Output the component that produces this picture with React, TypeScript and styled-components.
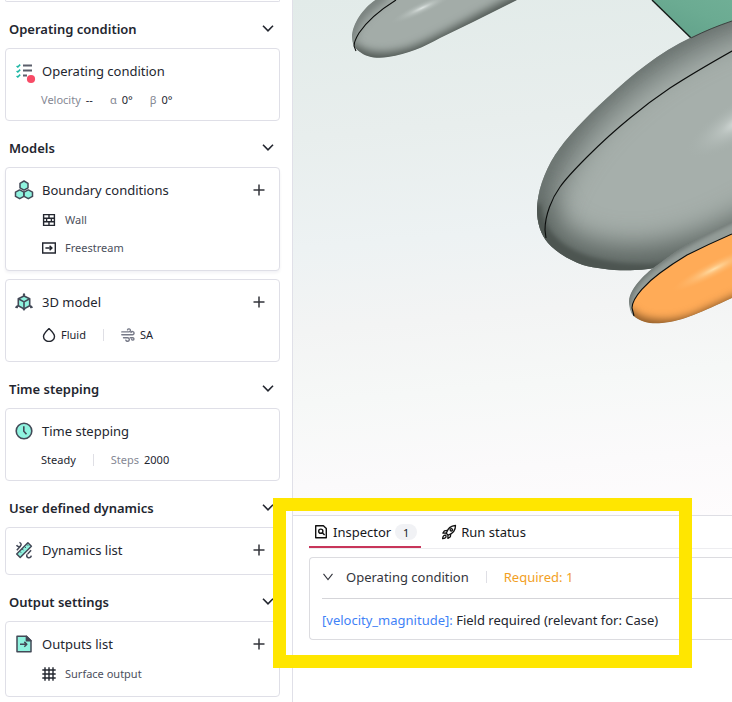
import React from "react";
import styled, { createGlobalStyle } from "styled-components";

const GlobalStyle = createGlobalStyle`
  * { box-sizing: border-box; }
  body {
    margin: 0;
    background: #fff;
    color: #23262f;
    font-family: "Noto Sans", "Open Sans", sans-serif;
    font-size: 13px;
  }
  button {
    font: inherit;
    color: inherit;
    background: none;
    border: 0;
    padding: 0;
    margin: 0;
    cursor: pointer;
    text-align: left;
  }
  svg { display: block; flex: none; }
`;

const Layout = styled.div`
  display: grid;
  grid-template-columns: 293px minmax(0, 1fr);
  min-height: 100vh;
`;

const Sidebar = styled.aside`
  border-right: 1px solid #e0e0e8;
  padding: 0 12px 5px 5px;
`;

const Card = styled.div<{ $raised?: boolean }>`
  border: 1px solid #dfdfe7;
  border-radius: 4px;
  padding: 10px 0 8px;
  background: #fff;
  box-shadow: ${(p) => (p.$raised ? "0 2px 3px rgba(40, 40, 90, 0.06)" : "none")};
  & + & { margin-top: 8px; }
`;

const CardEnd = styled.div`
  height: 2px;
  border: 1px solid #dfdfe7;
  border-top: 0;
  border-radius: 0 0 4px 4px;
`;

const SectionButton = styled.button`
  display: flex;
  align-items: center;
  justify-content: space-between;
  width: 100%;
  height: 46px;
  padding: 8px 6px 0 4px;
  font-size: 13px;
  font-weight: 600;
`;

const TitleRow = styled.div`
  display: flex;
  align-items: center;
  gap: 9px;
  height: 24px;
  margin-bottom: 4px;
  padding: 0 14px 0 9px;
`;

const Title = styled.h3`
  flex: 1;
  margin: 0;
  font-size: 13px;
  font-weight: 400;
`;

const IconSlot = styled.span`
  display: flex;
  svg { overflow: visible; }
`;

const ItemButton = styled.button`
  display: flex;
  align-items: center;
  gap: 9px;
  width: 100%;
  height: 28px;
  padding: 0 0 1px 36px;
  font-size: 11px;
  color: #4c4f5c;
  svg { color: #23262f; }
`;

const Meta = styled.div<{ $tall?: boolean }>`
  display: flex;
  align-items: center;
  gap: 17px;
  height: ${(p) => (p.$tall ? 35 : 25)}px;
  padding: ${(p) => (p.$tall ? "0 0 2px 36px" : "0 0 0 35px")};
  font-size: 11px;
`;

const Pair = styled.span`
  display: flex;
  align-items: center;
  gap: 5px;
`;

const Muted = styled.span`
  color: #858894;
`;

const Divider = styled.span`
  width: 1px;
  height: 12px;
  background: #dfdfe5;
`;

const Main = styled.main`
  display: flex;
  flex-direction: column;
  min-width: 0;
`;

const Viewport = styled.div`
  flex: 1 1 0;
  min-height: 300px;
  overflow: hidden;
  display: flex;
  background: linear-gradient(
    175deg,
    #e2ebe9 0%,
    #e8eeed 25%,
    #edf2f3 45%,
    #f3f4f4 60%,
    #f6f8f7 73%,
    #fbfafb 88%,
    #fefcfd 100%
  );
  svg { width: 100%; height: 100%; }
`;

const Panel = styled.section`
  position: relative;
  min-height: 187px;
  padding-left: 16px;
  border-top: 1px solid #dedee4;
  background: #fff;
`;

const Tabs = styled.div`
  display: flex;
  gap: 16px;
  height: 33px;
  border-bottom: 1px solid #ededf0;
`;

const Tab = styled.button<{ $active?: boolean }>`
  display: flex;
  align-items: center;
  gap: 4px;
  height: 32px;
  padding: 2px 4px 0;
  border-bottom: 2px solid ${(p) => (p.$active ? "#c8355a" : "transparent")};
  font-size: 13px;
  color: #17181c;
`;

const Count = styled.span`
  display: grid;
  place-items: center;
  width: 22px;
  height: 16px;
  border-radius: 8px;
  background: #f1f2f5;
  font-size: 11px;
`;

const Issue = styled.div`
  margin-top: 8px;
  padding-left: 12px;
  border: 1px solid #dcdce0;
  border-right: 0;
  border-radius: 4px 0 0 4px;
`;

const IssueHeader = styled.button`
  display: flex;
  align-items: center;
  width: 100%;
  height: 41px;
  padding-bottom: 2px;
  border-bottom: 1px solid #d5d5d9;
  gap: 17px;
  color: #33353d;
`;

const IssueTitle = styled.span`
  display: flex;
  align-items: center;
  gap: 12px;
`;

const Required = styled.span`
  color: #f2a024;
`;

const IssueText = styled.p`
  margin: 0;
  padding-top: 2px;
  line-height: 38px;
  white-space: nowrap;
  a { color: #3f82f7; text-decoration: none; }
`;

const Highlight = styled.div`
  position: absolute;
  left: -20px;
  top: -18px;
  width: 419px;
  height: 170px;
  border: 13px solid #ffe600;
  pointer-events: none;
`;

const Chevron = () => (
  <svg width="12" height="12" viewBox="0 0 12 12" fill="none" stroke="currentColor" strokeWidth="1.6">
    <path d="M1 2.7 6 7.8 11 2.7" />
  </svg>
);

const ThinChevron = () => (
  <svg width="12" height="12" viewBox="0 0 12 12" fill="none" stroke="#33353d" strokeWidth="1.1">
    <path d="M1.5 2.8 6 8.6 10.5 2.8" />
  </svg>
);

const AddButton = ({ label }: { label: string }) => (
  <button type="button" aria-label={label}>
    <svg width="12" height="12" viewBox="0 0 12 12" stroke="#33353b" strokeWidth="1.5">
      <path d="M6 .5v11M.5 6h11" />
    </svg>
  </button>
);

const ChecklistIcon = () => (
  <svg width="18" height="18" viewBox="0 0 18 18" fill="none">
    <path d="M1.6 4l1.2 1 2.4-2.4M1.6 9l1.2 1 2.4-2.4M1.6 14l1.2 1 2.4-2.4" stroke="#20b8a6" strokeWidth="1.6" />
    <path d="M8 3.5h9M8 8.5h9M8 13.5h4" stroke="#5b5e6b" strokeWidth="1.8" />
    <circle cx="16" cy="17" r="4.1" fill="#f84b66" />
  </svg>
);

const HexagonsIcon = () => (
  <svg width="18" height="18" viewBox="0 0 18 18" fill="#8ff3df" stroke="#434957" strokeWidth="1.5" strokeLinejoin="round">
    <path d="M9 0 13 2.3v4.5L9 9.1 5 6.8V2.3z" />
    <path d="M4.7 8.9 8.9 11.2v4.2l-4.2 2.3-4.2-2.3v-4.2z" />
    <path d="M13.3 8.9 17.5 11.2v4.2l-4.2 2.3-4.2-2.3v-4.2z" />
  </svg>
);

const CubeIcon = () => (
  <svg width="18" height="18" viewBox="0 0 18 18" fill="none" stroke="#434957" strokeWidth="1.6" strokeLinejoin="round">
    <path d="M9 3 14.7 5.8v6.9L9 15.9 3.3 12.7V5.8z" fill="#8ff3df" />
    <path d="M3.3 5.8 9 8.9l5.7-3.1M9 8.9v7M9 3V.4M3.3 12.7.6 14.6M14.7 12.7l2.7 1.9" />
    <path d="M8 2.4 9 1l1 1.4M1.9 12.8l-.9 1.6 1.9.2M16.1 12.8l.9 1.6-1.9.2M8 16 9 17.2l1-1.2" strokeWidth="1.1" />
  </svg>
);

const ClockIcon = () => (
  <svg width="18" height="18" viewBox="0 0 18 18" fill="none" stroke="#434957" strokeWidth="1.6">
    <circle cx="9" cy="9" r="7.8" fill="#8ff3df" />
    <path d="M8.8 4.2v5.1l2.7 3" />
  </svg>
);

const RulerIcon = () => (
  <svg width="18" height="18" viewBox="0 0 18 18" fill="none" stroke="#434957" strokeWidth="1.5" strokeLinejoin="round">
    <path d="M1.7 13 12.9 1.8l3.5 3.5L5.2 16.5z" fill="#8ff3df" />
    <path d="M4.6 10.2l1.5 1.5M7 7.8l1.5 1.5M9.4 5.4l1.5 1.5M11.6 3.2l1.5 1.5" strokeWidth="1" />
    <path d="M4.4 1.4c2 .8 2.2 2.4 1 3.6-1.3 1.2-3.3.6-3.7-1M1.8 9.2 5.6 5M12.6 13.1l3.5-3.9M12.3 13.2c-1 1.2-.8 3 1 3.6 1.6.2 2.7-.5 3-2.1" />
  </svg>
);

const OutputIcon = () => (
  <svg width="18" height="18" viewBox="0 0 18 18" fill="none" stroke="#434957" strokeWidth="1.5" strokeLinejoin="round">
    <path d="M2 1.2h9.4l4.6 4.5v11.1H2z" fill="#8ff3df" />
    <path d="M11.4 1.2v4.5H16z" fill="#434957" />
    <path d="M5 9.3h6.8M9.3 6.9l2.5 2.4-2.5 2.4" />
  </svg>
);

const WallIcon = () => (
  <svg width="14" height="14" viewBox="0 0 14 14" fill="none" stroke="currentColor" strokeWidth="1.4">
    <path d="M1.6 1.6h10.8v10.8H1.6zM1.6 5.2h10.8M1.6 8.8h10.8M7 1.6v3.6M4.6 5.2v3.6M9.4 5.2v3.6M7 8.8v3.6" />
  </svg>
);

const InflowIcon = () => (
  <svg width="14" height="14" viewBox="0 0 14 14" fill="none" stroke="currentColor" strokeWidth="1.4">
    <path d="M.7 2h12.6v10H.7zM3.4 7h6M7.6 4.8 9.9 7 7.6 9.2" />
  </svg>
);

const GridIcon = () => (
  <svg width="14" height="14" viewBox="0 0 14 14" fill="none" stroke="currentColor" strokeWidth="1.4">
    <path d="M3 .3v13.4M7 .3v13.4M11 .3v13.4M.3 3h13.4M.3 7h13.4M.3 11h13.4" />
  </svg>
);

const DropIcon = () => (
  <svg width="14" height="14" viewBox="0 0 14 14" fill="none" stroke="#23262f" strokeWidth="1.4" strokeLinejoin="round">
    <path d="M7 .6C4.6 3 1.5 5.6 1.5 8.4a5.5 5.1 0 0 0 11 0C12.500 5.600 9.400 3 7 .6z" />
  </svg>
);

const WindIcon = () => (
  <svg width="14" height="14" viewBox="0 0 14 14" fill="none" stroke="#777a88" strokeWidth="1.4" strokeLinecap="round">
    <path d="M.8 3.900h7.200a1.500 1.500 0 1 0-1.500-2M.8 6.800h10.700a1.600 1.600 0 1 0-1.500-2.300M2.500 9.700h4a1.800 1.800 0 1 1-1.700 2.400M9.300 9.700h2.500a1.200 1.200 0 1 1-1.200 1.600" />
  </svg>
);

const InspectorIcon = () => (
  <svg width="16" height="16" viewBox="0 0 16 16" fill="none" stroke="#111" strokeWidth="1.4">
    <path d="M2.7 1.7h7.7l2.9 2.9v9.1H2.7z" strokeLinejoin="round" />
    <circle cx="7.8" cy="7.2" r="2.1" />
    <path d="M9.3 8.7l2.3 2.4" />
  </svg>
);

const RocketIcon = () => (
  <svg width="16" height="16" viewBox="0 0 16 16" fill="none" stroke="#111" strokeWidth="1.3" strokeLinejoin="round">
    <path d="M5.2 9.2C6.5 5 9.2 1.8 14.5 1.5c.1 5-2.9 8-7.2 9.7z" />
    <circle cx="10.3" cy="5.8" r="1.2" />
    <path d="M6.2 6.4 3.4 6.8 1.9 9.2l3.3 0M9.7 9.9l-.3 2.8-2.5 1.7V11.2M4.6 11.1c-1.6-.2-2.8 1-3 3.6 2.5-.1 3.8-1.3 3.4-2.9z" />
  </svg>
);

const BODY = "M740 17 L732 21 C717 26 705 31 692 37 C658 53 632 75 607 98 C586 117 566 138 555 155 C544 172 537 193 537 210 C537 223 541 235 548 243 C556 252 569 260 583 265 C598 269 617 271 635 270 C660 270 690 260 740 232Z";
const BODY_SEAM = "M740 47 L732 51 C709 64 690 75 670 88 C655 98 642 108 630 118 C614 131 600 144 587 157 C577 167 567 177 560 187 C552 198 545 215 545 230 L546 238";
const POD = "M377 -1 C365 6 352 23 352 37 C352 43 354 48 360 52 C366 57 377 59 388 57 C408 54 424 47 440 38 L473 22 L519 -1Z";
const POD_SEAM = "M396 0 C380 10 367 21 359 33 C356 38 354 42 354 46 L356 51";
const ENGINE = "M740 218 L732 222 C716 229 704 236 690 243 C679 249 669 256 660 263 C645 273 630 288 629 301 C629 310 631 315 636 318 C643 322 652 324 662 323 C683 321 702 312 732 298 L740 294Z";
const ENGINE_FRONT = "M740 230 L732 234 C716 241 701 248 687 255 C677 261 668 267 660 273 C649 281 632 297 632 308 L634 316 C642 323 652 324 662 323 C683 321 702 312 732 298 L740 294Z";
const ENGINE_SEAM = "M740 230 L732 234 C716 241 701 248 687 255 C677 261 668 267 660 273 C649 281 632 297 632 308 L634 316";

const AircraftModel = () => (
  <svg viewBox="293 0 439 515" preserveAspectRatio="xMinYMin slice" role="img" aria-label="Aircraft geometry">
    <defs>
      <clipPath id="body"><path d={BODY} /></clipPath>
      <clipPath id="pod"><path d={POD} /></clipPath>
      <clipPath id="engine"><path d={ENGINE} /></clipPath>
      <clipPath id="front"><path d={ENGINE_FRONT} /></clipPath>
      <filter id="soft2" filterUnits="userSpaceOnUse" x="293" y="-60" width="560" height="460" colorInterpolationFilters="sRGB"><feGaussianBlur stdDeviation="2" /></filter>
      <filter id="soft4" filterUnits="userSpaceOnUse" x="293" y="-60" width="560" height="460" colorInterpolationFilters="sRGB"><feGaussianBlur stdDeviation="4" /></filter>
      <filter id="soft14" filterUnits="userSpaceOnUse" x="293" y="-60" width="560" height="460" colorInterpolationFilters="sRGB"><feGaussianBlur stdDeviation="14" /></filter>
      <linearGradient id="wing" x1="0" y1="1" x2="1" y2="0">
        <stop offset="0" stopColor="#5f9f88" />
        <stop offset=".6" stopColor="#6bab92" />
        <stop offset="1" stopColor="#70af96" />
      </linearGradient>
      <radialGradient id="glow">
        <stop offset="0" stopColor="#dfe5e3" />
        <stop offset=".35" stopColor="#c5cdca" stopOpacity=".6" />
        <stop offset="1" stopColor="#a8b2ae" stopOpacity="0" />
      </radialGradient>
      <radialGradient id="warmGlow">
        <stop offset="0" stopColor="#ffdfa8" />
        <stop offset=".4" stopColor="#ffc987" stopOpacity=".6" />
        <stop offset="1" stopColor="#ffb566" stopOpacity="0" />
      </radialGradient>
    </defs>

    <path d="M652 0 691 38 732 21 740 17V0z" fill="url(#wing)" />
    <path d="M652 0 691 38" stroke="#151a18" strokeWidth="1.4" />

    <g clipPath="url(#pod)">
      <path d={POD} fill="#a3aca8" />
      <path d="M386 -6 C360 10 350 25 350 40" stroke="#767e7b" strokeWidth="12" fill="none" filter="url(#soft4)" />
      <path d="M346 47 C360 62 382 65 412 56 C442 45 465 29 530 -3" stroke="#525a56" strokeWidth="17" fill="none" filter="url(#soft4)" />
      <ellipse cx="422" cy="8" rx="34" ry="6" transform="rotate(-25 422 8)" fill="url(#glow)" />
    </g>
    <path d={POD_SEAM} fill="none" stroke="#0b0d0c" strokeWidth="1.1" />

    <g clipPath="url(#body)">
      <path d={BODY} fill="#a6afab" />
      <path d="M760 10 C650 40 541 130 531 230" stroke="#6a7370" strokeWidth="34" fill="none" filter="url(#soft14)" />
      <path d="M748 12 C650 40 544 130 535 210" stroke="#69716e" strokeWidth="10" fill="none" filter="url(#soft4)" opacity=".8" />
      <path d="M526 200 C534 255 590 272 650 268 C700 262 730 246 780 220" stroke="#5c6561" strokeWidth="46" fill="none" filter="url(#soft14)" />
      <path d="M532 205 C536 254 587 274 650 273 C690 271 720 256 745 240" stroke="#4d5551" strokeWidth="18" fill="none" filter="url(#soft2)" />
      <ellipse cx="740" cy="121" rx="62" ry="20" transform="rotate(-32 740 121)" fill="url(#glow)" />
    </g>
    <path d={BODY_SEAM} fill="none" stroke="#0b0d0c" strokeWidth="1.1" />
    <path d="M691 38 C705 31 717 26 732 21" fill="none" stroke="#3a423f" />

    <g clipPath="url(#engine)">
      <path d={ENGINE} fill="#949d99" />
      <path d="M740 216 C680 244 626 276 627 306" stroke="#6f7774" strokeWidth="7" fill="none" filter="url(#soft2)" />
    </g>
    <g clipPath="url(#front)">
      <path d={ENGINE_FRONT} fill="#ffab57" />
      <path d="M624 312 C636 329 667 332 697 321 L747 298" stroke="#8a5827" strokeWidth="15" fill="none" filter="url(#soft4)" />
      <ellipse cx="714" cy="269" rx="46" ry="8" transform="rotate(-27 714 269)" fill="url(#warmGlow)" />
    </g>
    <path d={ENGINE_SEAM} fill="none" stroke="#0b0d0c" strokeWidth="1.1" />
  </svg>
);

const Section = ({ title, children }: { title: string; children: React.ReactNode }) => (
  <section>
    <SectionButton type="button" aria-expanded="true">
      {title}
      <Chevron />
    </SectionButton>
    {children}
  </section>
);

const CardTitle = ({ icon, title, addable }: { icon: React.ReactNode; title: string; addable?: boolean }) => (
  <TitleRow>
    <IconSlot>{icon}</IconSlot>
    <Title>{title}</Title>
    {addable && <AddButton label={`Add to ${title}`} />}
  </TitleRow>
);

export default function App() {
  return (
    <>
      <GlobalStyle />
      <Layout>
        <Sidebar>
          <CardEnd />
          <Section title="Operating condition">
            <Card>
              <CardTitle icon={<ChecklistIcon />} title="Operating condition" />
              <Meta>
                <Pair><Muted>Velocity</Muted> --</Pair>
                <Pair><Muted>α</Muted> 0°</Pair>
                <Pair><Muted>β</Muted> 0°</Pair>
              </Meta>
            </Card>
          </Section>
          <Section title="Models">
            <Card $raised>
              <CardTitle icon={<HexagonsIcon />} title="Boundary conditions" addable />
              <ItemButton type="button"><WallIcon />Wall</ItemButton>
              <ItemButton type="button"><InflowIcon />Freestream</ItemButton>
            </Card>
            <Card>
              <CardTitle icon={<CubeIcon />} title="3D model" addable />
              <Meta $tall>
                <Pair><DropIcon /> Fluid</Pair>
                <Divider />
                <Pair><WindIcon /> SA</Pair>
              </Meta>
            </Card>
          </Section>
          <Section title="Time stepping">
            <Card>
              <CardTitle icon={<ClockIcon />} title="Time stepping" />
              <Meta>
                <span>Steady</span>
                <Divider />
                <Pair><Muted>Steps</Muted> 2000</Pair>
              </Meta>
            </Card>
          </Section>
          <Section title="User defined dynamics">
            <Card>
              <CardTitle icon={<RulerIcon />} title="Dynamics list" addable />
            </Card>
          </Section>
          <Section title="Output settings">
            <Card>
              <CardTitle icon={<OutputIcon />} title="Outputs list" addable />
              <ItemButton type="button"><GridIcon />Surface output</ItemButton>
            </Card>
          </Section>
        </Sidebar>
        <Main>
          <Viewport><AircraftModel /></Viewport>
          <Panel>
            <Tabs role="tablist">
              <Tab type="button" role="tab" aria-selected="true" $active>
                <InspectorIcon />Inspector<Count>1</Count>
              </Tab>
              <Tab type="button" role="tab" aria-selected="false">
                <RocketIcon />Run status
              </Tab>
            </Tabs>
            <Issue>
              <IssueHeader type="button" aria-expanded="true">
                <IssueTitle><ThinChevron />Operating condition</IssueTitle>
                <Divider />
                <Required>Required: 1</Required>
              </IssueHeader>
              <IssueText>
                <a href="#velocity_magnitude">[velocity_magnitude]:</a> Field required (relevant for: Case)
              </IssueText>
            </Issue>
            <Highlight />
          </Panel>
        </Main>
      </Layout>
    </>
  );
}
